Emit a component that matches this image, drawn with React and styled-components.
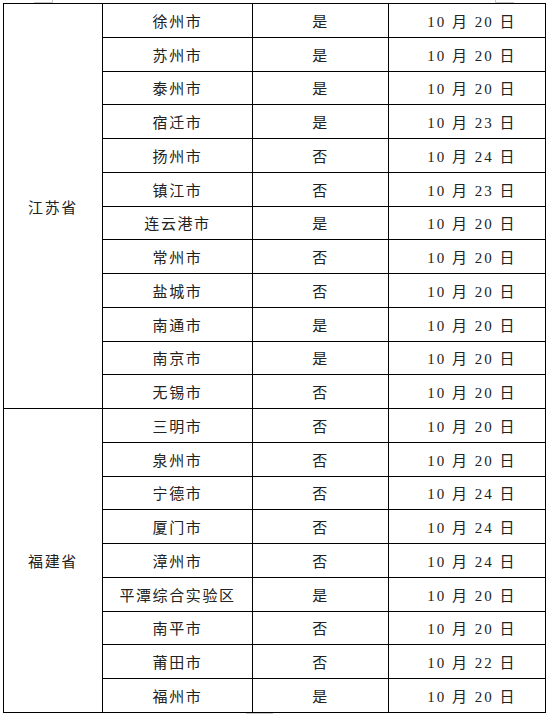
import styled, { createGlobalStyle } from "styled-components";

const GlobalStyle = createGlobalStyle`
  html, body {
    margin: 0;
    padding: 0;
    background: #fff;
  }
`;

const jiangsu = [
  ["徐州市", "是", "20"],
  ["苏州市", "是", "20"],
  ["泰州市", "是", "20"],
  ["宿迁市", "是", "23"],
  ["扬州市", "否", "24"],
  ["镇江市", "否", "23"],
  ["连云港市", "是", "20"],
  ["常州市", "否", "20"],
  ["盐城市", "否", "20"],
  ["南通市", "是", "20"],
  ["南京市", "是", "20"],
  ["无锡市", "否", "20"],
];

const fujian = [
  ["三明市", "否", "20"],
  ["泉州市", "否", "20"],
  ["宁德市", "否", "24"],
  ["厦门市", "否", "24"],
  ["漳州市", "否", "24"],
  ["平潭综合实验区", "是", "20"],
  ["南平市", "否", "20"],
  ["莆田市", "否", "22"],
  ["福州市", "是", "20"],
];

const groups = [
  { province: "江苏省", rows: jiangsu },
  { province: "福建省", rows: fujian },
];

const Page = styled.div`
  position: relative;
  padding: 3px 0 0 3px;
  width: 547px;
  height: 715px;
  box-sizing: border-box;
  overflow: hidden;
`;

const Table = styled.table`
  border-collapse: collapse;
  table-layout: fixed;
  width: 542px;
  font-family: "Liberation Serif", "Noto Sans CJK SC", serif;
  font-size: 15px;
  color: #222;
`;

const Cell = styled.td`
  border: 1px solid #000;
  height: 32.75px;
  padding: ${(p) => (p.$date ? "0 0 0 10px" : "0")};
  text-align: center;
  vertical-align: middle;
  letter-spacing: ${(p) => (p.$date ? "2px" : "1.6px")};
  white-space: pre;
`;

const Mark = styled.div`
  position: absolute;
  top: 0;
  width: 18px;
  height: 2px;
  border-bottom: 1px solid #c8c8c8;
  ${(p) => (p.$side === "left" ? "border-right: 1px solid #c8c8c8;" : "border-left: 1px solid #c8c8c8;")}
  left: ${(p) => p.$x}px;
`;

const BottomMark = styled.div`
  position: absolute;
  bottom: 0;
  left: 246px;
  width: 27px;
  height: 1px;
  border-top: 1px solid #c8c8c8;
`;

export default function App() {
  return (
    <Page>
      <GlobalStyle />
      <Mark $side="left" $x={34} />
      <Mark $side="right" $x={495} />
      <Table>
        <colgroup>
          <col style={{ width: 99 }} />
          <col style={{ width: 150 }} />
          <col style={{ width: 136 }} />
          <col style={{ width: 157 }} />
        </colgroup>
        <tbody>
          {groups.map((g) =>
            g.rows.map((r, i) => (
              <tr key={g.province + r[0]}>
                {i === 0 && <Cell rowSpan={g.rows.length}>{g.province}</Cell>}
                <Cell>{r[0]}</Cell>
                <Cell>{r[1]}</Cell>
                <Cell $date>{`10 月 ${r[2]} 日`}</Cell>
              </tr>
            ))
          )}
        </tbody>
      </Table>
      <BottomMark />
    </Page>
  );
}
